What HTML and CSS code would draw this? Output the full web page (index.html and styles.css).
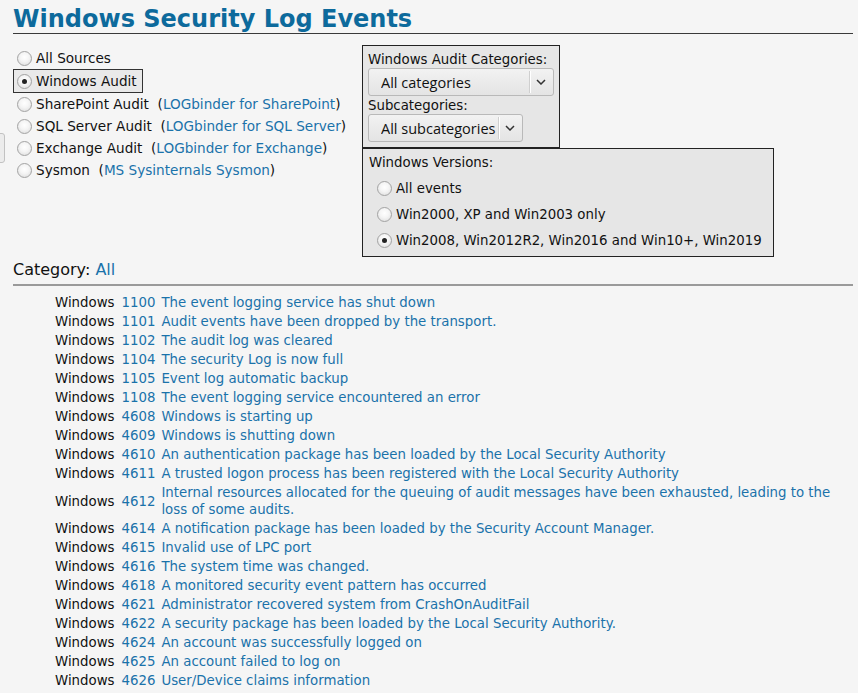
FILE: index.html
```html
<!DOCTYPE html>
<html>
<head>
<meta charset="utf-8">
<link rel="stylesheet" href="styles.css">
</head>
<body>
<div class="edge-tab"></div>
<div class="page">
  <h1 class="title">Windows Security Log Events</h1>
  <div class="controls">
    <div class="sources">
      <div class="src"><span class="radio"></span>All Sources</div>
      <div class="src src-on"><span class="radio on"></span>Windows Audit</div>
      <div class="src"><span class="radio"></span>SharePoint Audit&nbsp; (<a class="lnk">LOGbinder for SharePoint</a>)</div>
      <div class="src"><span class="radio"></span>SQL Server Audit&nbsp; (<a class="lnk">LOGbinder for SQL Server</a>)</div>
      <div class="src"><span class="radio"></span>Exchange Audit&nbsp; (<a class="lnk">LOGbinder for Exchange</a>)</div>
      <div class="src"><span class="radio"></span>Sysmon&nbsp; (<a class="lnk">MS Sysinternals Sysmon</a>)</div>
    </div>
    <div class="filters">
      <div class="box box-cat">
        <div class="blabel">Windows Audit Categories:</div>
        <div class="sel sel-cat"><span class="sel-text">All categories</span><span class="sel-sep"></span><svg class="chev" width="10" height="6" viewBox="0 0 10 6"><path d="M1 1 L5 5 L9 1" fill="none" stroke="#333" stroke-width="1.5"/></svg></div>
        <div class="blabel">Subcategories:</div>
        <div class="sel sel-sub"><span class="sel-text">All subcategories</span><span class="sel-sep"></span><svg class="chev" width="10" height="6" viewBox="0 0 10 6"><path d="M1 1 L5 5 L9 1" fill="none" stroke="#333" stroke-width="1.5"/></svg></div>
      </div>
      <div class="box box-ver">
        <div class="vlabel">Windows Versions:</div>
        <div class="ver"><span class="radio"></span>All events</div>
        <div class="ver"><span class="radio"></span>Win2000, XP and Win2003 only</div>
        <div class="ver"><span class="radio on"></span>Win2008, Win2012R2, Win2016 and Win10+, Win2019</div>
      </div>
    </div>
  </div>
  <div class="category">Category: <a class="lnk">All</a></div>
  <table class="events">
    <tr><td class="src-col">Windows</td><td class="id"><a class="lnk">1100</a></td><td class="desc"><a class="lnk">The event logging service has shut down</a></td></tr>
    <tr><td class="src-col">Windows</td><td class="id"><a class="lnk">1101</a></td><td class="desc"><a class="lnk">Audit events have been dropped by the transport.</a></td></tr>
    <tr><td class="src-col">Windows</td><td class="id"><a class="lnk">1102</a></td><td class="desc"><a class="lnk">The audit log was cleared</a></td></tr>
    <tr><td class="src-col">Windows</td><td class="id"><a class="lnk">1104</a></td><td class="desc"><a class="lnk">The security Log is now full</a></td></tr>
    <tr><td class="src-col">Windows</td><td class="id"><a class="lnk">1105</a></td><td class="desc"><a class="lnk">Event log automatic backup</a></td></tr>
    <tr><td class="src-col">Windows</td><td class="id"><a class="lnk">1108</a></td><td class="desc"><a class="lnk">The event logging service encountered an error</a></td></tr>
    <tr><td class="src-col">Windows</td><td class="id"><a class="lnk">4608</a></td><td class="desc"><a class="lnk">Windows is starting up</a></td></tr>
    <tr><td class="src-col">Windows</td><td class="id"><a class="lnk">4609</a></td><td class="desc"><a class="lnk">Windows is shutting down</a></td></tr>
    <tr><td class="src-col">Windows</td><td class="id"><a class="lnk">4610</a></td><td class="desc"><a class="lnk">An authentication package has been loaded by the Local Security Authority</a></td></tr>
    <tr><td class="src-col">Windows</td><td class="id"><a class="lnk">4611</a></td><td class="desc"><a class="lnk">A trusted logon process has been registered with the Local Security Authority</a></td></tr>
    <tr><td class="src-col">Windows</td><td class="id"><a class="lnk">4612</a></td><td class="desc"><a class="lnk">Internal resources allocated for the queuing of audit messages have been exhausted, leading to the loss of some audits.</a></td></tr>
    <tr><td class="src-col">Windows</td><td class="id"><a class="lnk">4614</a></td><td class="desc"><a class="lnk">A notification package has been loaded by the Security Account Manager.</a></td></tr>
    <tr><td class="src-col">Windows</td><td class="id"><a class="lnk">4615</a></td><td class="desc"><a class="lnk">Invalid use of LPC port</a></td></tr>
    <tr><td class="src-col">Windows</td><td class="id"><a class="lnk">4616</a></td><td class="desc"><a class="lnk">The system time was changed.</a></td></tr>
    <tr><td class="src-col">Windows</td><td class="id"><a class="lnk">4618</a></td><td class="desc"><a class="lnk">A monitored security event pattern has occurred</a></td></tr>
    <tr><td class="src-col">Windows</td><td class="id"><a class="lnk">4621</a></td><td class="desc"><a class="lnk">Administrator recovered system from CrashOnAuditFail</a></td></tr>
    <tr><td class="src-col">Windows</td><td class="id"><a class="lnk">4622</a></td><td class="desc"><a class="lnk">A security package has been loaded by the Local Security Authority.</a></td></tr>
    <tr><td class="src-col">Windows</td><td class="id"><a class="lnk">4624</a></td><td class="desc"><a class="lnk">An account was successfully logged on</a></td></tr>
    <tr><td class="src-col">Windows</td><td class="id"><a class="lnk">4625</a></td><td class="desc"><a class="lnk">An account failed to log on</a></td></tr>
    <tr><td class="src-col">Windows</td><td class="id"><a class="lnk">4626</a></td><td class="desc"><a class="lnk">User/Device claims information</a></td></tr>
  </table>
</div>
</body>
</html>
```
FILE: styles.css
```css
html, body {
  margin: 0;
  padding: 0;
  background: #f5f5f5;
  font-family: "DejaVu Sans", Verdana, sans-serif;
  font-size: 13.33px;
  color: #111;
}
.page {
  padding: 0 5px 0 13px;
}
.edge-tab {
  position: absolute;
  left: -10px;
  top: 133px;
  width: 13px;
  height: 28px;
  border: 1px solid #c2c2c2;
  border-radius: 3px;
  background: #ececec;
}
.title {
  margin: 5px 0 0;
  font-size: 24px;
  line-height: 28px;
  font-weight: bold;
  color: #0d6a9c;
  border-bottom: 1px solid #3a3a3a;
}
.lnk {
  color: #1a72aa;
  text-decoration: none;
}
.controls {
  display: flex;
  align-items: flex-start;
  margin-top: 11px;
}
.sources {
  width: 349px;
  padding-top: 2px;
  font-size: 13.6px;
}
.src {
  display: flex;
  align-items: center;
  height: 22px;
  padding-left: 4px;
  white-space: pre;
}
.src-on {
  display: inline-flex;
  border: 1px solid #333;
  background: #e9e9e9;
  padding: 0 5px 0 3px;
}
.radio {
  display: inline-block;
  box-sizing: border-box;
  width: 15px;
  height: 15px;
  border: 1px solid #a3a3a3;
  border-radius: 50%;
  background: radial-gradient(circle at 50% 40%, #ffffff 0%, #f4f4f4 45%, #d8d8d8 100%);
  margin-right: 4px;
  position: relative;
  flex: none;
}
.radio.on::after {
  content: "";
  position: absolute;
  left: 4px;
  top: 4px;
  width: 5px;
  height: 5px;
  border-radius: 50%;
  background: #222;
}
.filters {
  display: flex;
  flex-direction: column;
  align-items: flex-start;
}
.box {
  border: 1px solid #222;
  background: #e6e6e6;
}
.box-cat {
  width: 186px;
  padding: 6px 5px 5px 5px;
}
.blabel {
  line-height: 15px;
  height: 15px;
  white-space: nowrap;
}
.blabel + .sel {
  margin-top: 1px;
}
.sel + .blabel {
  margin-top: 2px;
}
.sel {
  box-sizing: border-box;
  display: flex;
  align-items: center;
  height: 28px;
  border: 1px solid #b9b9b9;
  border-radius: 3px;
  background: linear-gradient(#f2f2f2, #e4e4e4);
  padding-left: 12px;
  font-family: "Open Sans", "DejaVu Sans", sans-serif;
  font-size: 14.5px;
  color: #111;
}
.sel-cat { width: 186px; }
.sel-sub { width: 155px; margin-top: 2px; }
.sel-text {
  flex: 1;
  white-space: nowrap;
  overflow: hidden;
}
.sel-sep {
  flex: none;
  width: 1px;
  height: 22px;
  background: #fff;
  border-left: 1px solid #cfcfcf;
  margin-right: 5px;
}
.chev {
  flex: none;
  margin-right: 7px;
}
.box-ver {
  padding: 6px 11px 3px 6px;
}
.vlabel {
  line-height: 15px;
  height: 15px;
  margin-bottom: 5px;
}
.ver {
  display: flex;
  align-items: center;
  height: 26px;
  margin-left: 8px;
  white-space: nowrap;
}
.category {
  font-size: 16px;
  line-height: 19px;
  margin-top: 3px;
  padding-bottom: 5px;
  border-bottom: 2px solid #9a9a9a;
}
.events {
  border-collapse: collapse;
  margin: 7px 0 0 38px;
  width: 798px;
}
.events td {
  padding: 1px 3px;
  line-height: 17px;
  vertical-align: middle;
}
.events td.src-col {
  padding-left: 4px;
  padding-right: 4px;
}
.src-col, .id {
  white-space: nowrap;
  width: 1px;
}
```
